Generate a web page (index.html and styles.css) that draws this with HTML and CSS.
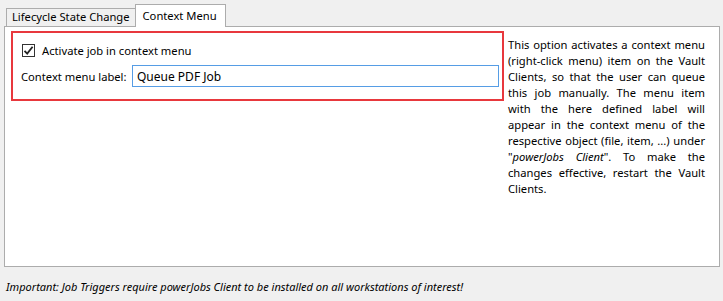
FILE: index.html
```html
<!DOCTYPE html>
<html lang="en">

<head>
    <meta charset="UTF-8">
    <title>Job Triggers</title>
    <link rel="stylesheet" href="styles.css">
</head>

<body>
    <div class="tabs">
        <span class="tab">Lifecycle State Change</span>
        <span class="tab active">Context Menu</span>
    </div>
    <div class="panel">
        <div class="group">
            <label class="check-row">
                <span class="check">
                    <svg width="11" height="11" viewBox="0 0 11 11"><path d="M1.5 5.8 L4.2 8.6 L9.6 1.8" fill="none" stroke="#222" stroke-width="1.8" /></svg>
                </span>
                Activate job in context menu
            </label>
            <div class="field-row">
                <span class="field-label">Context menu label:</span>
                <input class="field" type="text" value="Queue PDF Job">
            </div>
        </div>
        <p class="desc">This option activates a context menu (right-click menu) item on the Vault Clients, so that the user can queue this job manually. The menu item with the here defined label will appear in the context menu of the respective object (file, item, ...) under "<i>powerJobs Client</i>". To make the changes effective, restart the Vault Clients.</p>
    </div>
    <p class="note">Important: Job Triggers require powerJobs Client to be installed on all workstations of interest!</p>
</body>

</html>
```

FILE: styles.css
```css
* {
    margin: 0;
    padding: 0;
    box-sizing: border-box;
}

body {
    background: #f0f0f0;
    font-family: "Noto Sans", "Open Sans", sans-serif;
    font-size: 11.2px;
    color: #000;
    width: 723px;
    height: 301px;
    overflow: hidden;
}

.tabs {
    display: flex;
    align-items: flex-end;
    padding: 4px 0 0 6px;
    height: 27px;
}

.tab {
    height: 18px;
    padding: 0 5px;
    line-height: 16px;
    border: 1px solid #acacac;
    border-bottom: 0;
    background: #f0f0f0;
    margin-bottom: 1px;
    white-space: nowrap;
}

.tab.active {
    height: 23px;
    background: #fff;
    margin-left: -1px;
    margin-bottom: 0;
    padding: 3px 8px 0 7px;
    position: relative;
    z-index: 1;
}

.panel {
    display: flex;
    align-items: flex-start;
    width: 716px;
    height: 241px;
    margin: -1px 0 0 4px;
    border: 1px solid #acacac;
    background: #fff;
    padding: 4px 0 0 6px;
}

.group {
    flex: none;
    width: 493px;
    height: 70px;
    border: 2px solid #e8383d;
    padding: 9px 0 0 8px;
}

.check-row {
    display: flex;
    align-items: center;
    gap: 7px;
    height: 16px;
    margin-left: 1px;
}

.check {
    width: 13px;
    height: 13px;
    border: 1px solid #333;
    display: flex;
    align-items: center;
    justify-content: center;
}

.field-row {
    display: flex;
    align-items: center;
    margin-top: 7px;
}

.field-label {
    width: 111px;
    white-space: nowrap;
}

.field {
    width: 367px;
    height: 22px;
    border: 1px solid #569de5;
    font: inherit;
    font-size: 12px;
    padding: 0 0 0 4px;
    outline: none;
}

.desc {
    width: 197px;
    margin: 6px 0 0 4px;
    line-height: 16px;
    text-align: justify;
}

.note {
    margin: 12px 0 0 6px;
    font-style: italic;
    font-size: 11px;
}
```
